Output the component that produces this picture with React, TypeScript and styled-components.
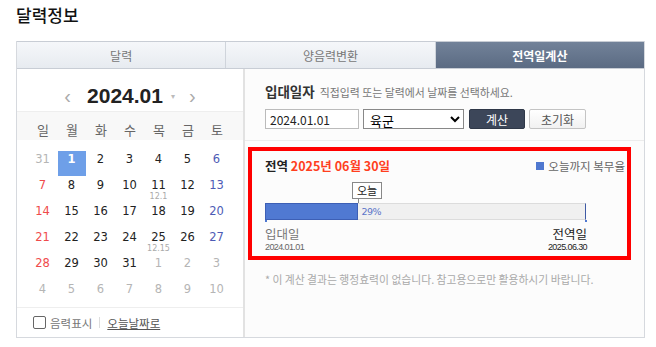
import React from "react";
import styled, { createGlobalStyle } from "styled-components";

const GlobalStyle = createGlobalStyle`
  body {
    margin: 0;
    background: #fff;
    font-family: "Liberation Sans", "Noto Sans CJK KR", sans-serif;
  }
`;

type Day = { n: number; muted?: boolean; lunar?: string; selected?: boolean };

const weeks: Day[][] = [
  [{ n: 31, muted: true }, { n: 1, selected: true }, { n: 2 }, { n: 3 }, { n: 4 }, { n: 5 }, { n: 6 }],
  [{ n: 7 }, { n: 8 }, { n: 9 }, { n: 10 }, { n: 11, lunar: "12.1" }, { n: 12 }, { n: 13 }],
  [{ n: 14 }, { n: 15 }, { n: 16 }, { n: 17 }, { n: 18 }, { n: 19 }, { n: 20 }],
  [{ n: 21 }, { n: 22 }, { n: 23 }, { n: 24 }, { n: 25, lunar: "12.15" }, { n: 26 }, { n: 27 }],
  [{ n: 28 }, { n: 29 }, { n: 30 }, { n: 31 }, { n: 1, muted: true }, { n: 2, muted: true }, { n: 3, muted: true }],
  [4, 5, 6, 7, 8, 9, 10].map((n) => ({ n, muted: true })),
];

const weekdays = ["일", "월", "화", "수", "목", "금", "토"];
const tabs = ["달력", "양음력변환", "전역일계산"];
const percent = 29;

const dayColor = (d: Day, col: number) => {
  if (d.selected) return "#fff";
  if (d.muted) return "#b5b5b5";
  if (col === 0) return "#ef4b4b";
  if (col === 6) return "#4d5bb5";
  return "#222";
};

const App = () => {
  return (
    <Page>
      <GlobalStyle />
      <Title>달력정보</Title>
      <Box>
        <TabBar>
          {tabs.map((t, i) => (
            <Tab key={t} active={i === 2}>
              {t}
            </Tab>
          ))}
        </TabBar>
        <Body>
          <CalendarPanel>
            <MonthHead>
              <Arrow>‹</Arrow>
              <Month>2024.01</Month>
              <Caret>▾</Caret>
              <Arrow>›</Arrow>
            </MonthHead>
            <WeekRow>
              {weekdays.map((w) => (
                <WeekLabel key={w}>{w}</WeekLabel>
              ))}
            </WeekRow>
            <Days>
              {weeks.map((week, wi) =>
                week.map((d, col) => (
                  <Cell key={`${wi}-${col}`} selected={d.selected}>
                    <Num color={dayColor(d, col)} bold={d.selected}>
                      {d.n}
                    </Num>
                    {d.lunar && <Lunar>{d.lunar}</Lunar>}
                  </Cell>
                ))
              )}
            </Days>
            <CalFooter>
              <Check />
              <FooterText>음력표시</FooterText>
              <Sep />
              <TodayLink>오늘날짜로</TodayLink>
            </CalFooter>
          </CalendarPanel>
          <CalcPanel>
            <Form>
              <FormLabel>
                입대일자 <Hint>직접입력 또는 달력에서 날짜를 선택하세요.</Hint>
              </FormLabel>
              <FormRow>
                <DateInput defaultValue="2024.01.01" />
                <Select defaultValue="육군">
                  <option>육군</option>
                  <option>해군</option>
                  <option>공군</option>
                  <option>해병대</option>
                </Select>
                <DarkButton>계산</DarkButton>
                <LightButton>초기화</LightButton>
              </FormRow>
            </Form>
            <Result>
              <ResultHead>
                <ResultTitle>
                  전역 <Red>2025년 06월 30일</Red>
                </ResultTitle>
                <Legend>
                  <LegendSwatch />
                  오늘까지 복무율
                </Legend>
              </ResultHead>
              <BarArea>
                <TodayTag style={{ left: `calc(${percent}% - 6px)` }}>오늘</TodayTag>
                <TodayLine style={{ left: `${percent}%` }} />
                <Bar>
                  <Fill style={{ width: `${percent}%` }} />
                  <Percent>{percent}%</Percent>
                </Bar>
              </BarArea>
              <Ends>
                <End>
                  <EndLabel>입대일</EndLabel>
                  <EndDate>2024.01.01</EndDate>
                </End>
                <End right>
                  <EndLabel dark>전역일</EndLabel>
                  <EndDate dark>2025.06.30</EndDate>
                </End>
              </Ends>
            </Result>
            <Note>* 이 계산 결과는 행정효력이 없습니다. 참고용으로만 활용하시기 바랍니다.</Note>
          </CalcPanel>
        </Body>
      </Box>
    </Page>
  );
};

export default App;

const Page = styled.div`
  padding: 4px 11px 0 16px;
  width: 629px;
`;
const Title = styled.div`
  font-family: "Noto Sans CJK KR", sans-serif;
  font-size: 17px;
  font-weight: 500;
  line-height: 22px;
  color: #111;
  height: 37px;
`;
const Box = styled.div`
  border: 1px solid #d6d9de;
  border-top: none;
  height: 296px;
  display: flex;
  flex-direction: column;
`;
const TabBar = styled.div`
  display: flex;
  height: 28px;
  border-top: 1px solid #c8cdd5;
  border-bottom: 1px solid #c8cdd5;
  background: linear-gradient(#f5f7fa, #e7ebf0);
`;
const Tab = styled.div<{ active?: boolean }>`
  flex: 1;
  display: flex;
  align-items: center;
  justify-content: center;
  font-family: "Noto Sans CJK KR", sans-serif;
  font-size: 12px;
  color: ${(p) => (p.active ? "#fff" : "#777")};
  font-weight: ${(p) => (p.active ? "bold" : "normal")};
  background: ${(p) => (p.active ? "linear-gradient(#728299, #5b6b83)" : "transparent")};
  border-left: 1px solid #cfd4db;
  &:first-child {
    border-left: none;
  }
`;
const Body = styled.div`
  flex: 1;
  display: flex;
`;
const CalendarPanel = styled.div`
  width: 226px;
  border-right: 2px solid #e2e2e2;
  background: #fff;
  display: flex;
  flex-direction: column;
`;
const MonthHead = styled.div`
  height: 43px;
  display: flex;
  align-items: center;
  justify-content: center;
  gap: 8px;
  padding-top: 12px;
  box-sizing: border-box;
  border-bottom: 1px solid #eee;
`;
const Arrow = styled.span`
  font-size: 20px;
  color: #aaa;
  line-height: 20px;
  margin: 0 4px;
`;
const Month = styled.span`
  font-family: "Liberation Sans", sans-serif;
  font-weight: bold;
  font-size: 21px;
  color: #222;
  margin-left: 4px;
`;
const Caret = styled.span`
  font-size: 8px;
  color: #bbb;
  margin-right: 2px;
`;
const WeekRow = styled.div`
  display: grid;
  grid-template-columns: repeat(7, 29px);
  justify-content: center;
  height: 28px;
  align-items: center;
  background: #f8f8f8;
`;
const WeekLabel = styled.div`
  text-align: center;
  font-family: "Noto Sans CJK KR", sans-serif;
  font-size: 13px;
  color: #666;
  padding-top: 6px;
`;
const Days = styled.div`
  display: grid;
  grid-template-columns: repeat(7, 29px);
  grid-auto-rows: 26px;
  justify-content: center;
  margin-top: 11px;
`;
const Cell = styled.div<{ selected?: boolean }>`
  text-align: center;
  margin: 0 1px 1px 0;
  background: ${(p) => (p.selected ? "#6e9fe8" : "transparent")};
`;
const Num = styled.div<{ color: string; bold?: boolean }>`
  font-family: "DejaVu Sans", sans-serif;
  font-size: 11.5px;
  line-height: 14px;
  padding-top: 1px;
  color: ${(p) => p.color};
  font-weight: ${(p) => (p.bold ? "bold" : "normal")};
`;
const Lunar = styled.div`
  font-family: "DejaVu Sans", sans-serif;
  font-size: 8px;
  line-height: 10px;
  color: #aaa;
`;
const CalFooter = styled.div`
  margin-top: auto;
  height: 29px;
  border-top: 1px solid #eee;
  display: flex;
  align-items: center;
  padding-left: 16px;
  font-family: "Noto Sans CJK KR", sans-serif;
  font-size: 11.5px;
`;
const Check = styled.span`
  width: 11px;
  height: 11px;
  border: 1px solid #666;
  border-radius: 2px;
  margin-right: 4px;
`;
const FooterText = styled.span`
  color: #777;
`;
const Sep = styled.span`
  width: 1px;
  height: 11px;
  background: #ddd;
  margin: 0 7px;
`;
const TodayLink = styled.span`
  color: #555;
  text-decoration: underline;
`;
const CalcPanel = styled.div`
  flex: 1;
  background: #fcfcfc;
  display: flex;
  flex-direction: column;
`;
const Form = styled.div`
  height: 72px;
  border-bottom: 1px solid #ececec;
  padding: 12px 0 0 20px;
  box-sizing: border-box;
  font-family: "Noto Sans CJK KR", sans-serif;
`;
const FormLabel = styled.div`
  font-size: 13.5px;
  font-weight: bold;
  color: #333;
  line-height: 20px;
`;
const Hint = styled.span`
  font-size: 10.9px;
  font-weight: normal;
  color: #777;
  margin-left: 2px;
`;
const FormRow = styled.div`
  display: flex;
  gap: 4px;
  margin-top: 7px;
  height: 20px;
`;
const DateInput = styled.input`
  width: 94px;
  height: 20px;
  box-sizing: border-box;
  border: 1px solid #bbb;
  padding: 0 4px;
  font-family: "Noto Sans CJK KR", sans-serif;
  font-size: 12px;
  color: #222;
  background: #fff;
`;
const Select = styled.select`
  width: 101px;
  height: 20px;
  box-sizing: border-box;
  border: 1px solid #888;
  font-family: "Noto Sans CJK KR", sans-serif;
  font-size: 13px;
  padding: 0 2px;
  background: #fff;
`;
const DarkButton = styled.button`
  width: 56px;
  height: 20px;
  margin-left: 1px;
  border: 1px solid #2f3848;
  border-radius: 2px;
  background: #3c4659;
  color: #fff;
  font-family: "Noto Sans CJK KR", sans-serif;
  font-size: 12px;
  padding: 0;
`;
const LightButton = styled.button`
  width: 57px;
  height: 20px;
  border: 1px solid #c4c4c4;
  border-radius: 2px;
  background: linear-gradient(#fff, #f1f1f1);
  color: #555;
  font-family: "Noto Sans CJK KR", sans-serif;
  font-size: 12px;
  padding: 0;
`;
const Result = styled.div`
  margin: 6px 13px 0 3px;
  border: 4px solid #ff0000;
  height: 99px;
  padding: 6px 13px 0 13px;
  font-family: "Noto Sans CJK KR", sans-serif;
`;
const ResultHead = styled.div`
  display: flex;
  justify-content: space-between;
  align-items: center;
  line-height: 18px;
  margin-right: -11px;
`;
const ResultTitle = styled.div`
  font-size: 12.5px;
  font-weight: bold;
  color: #222;
`;
const Red = styled.span`
  color: #ff3f1f;
`;
const Legend = styled.div`
  display: flex;
  align-items: center;
  font-size: 11.5px;
  color: #666;
`;
const LegendSwatch = styled.span`
  width: 8px;
  height: 8px;
  background: #4f78d0;
  margin-right: 4px;
`;
const BarArea = styled.div`
  position: relative;
  width: 321px;
  margin-top: 28px;
`;
const TodayTag = styled.div`
  position: absolute;
  top: -21px;
  width: 28px;
  height: 15px;
  border: 1px solid #888;
  background: #fff;
  font-size: 11px;
  line-height: 15px;
  text-align: center;
  color: #222;
`;
const TodayLine = styled.div`
  position: absolute;
  top: -5px;
  width: 1px;
  height: 5px;
  background: #888;
`;
const Bar = styled.div`
  position: relative;
  height: 17px;
  box-sizing: border-box;
  background: #f0f0f0;
  border: 1px solid #dcdcdc;
  border-right: 1px solid #3e5aa5;
  display: flex;
  align-items: center;
  &::before,
  &::after {
    content: "";
    position: absolute;
    bottom: -3px;
    width: 2px;
    height: 2px;
    background: #4f78d0;
  }
  &::before {
    left: -1px;
  }
  &::after {
    right: -2px;
  }
`;
const Fill = styled.div`
  height: 17px;
  margin: -1px 0 -1px -1px;
  box-sizing: border-box;
  background: #5079d2;
  border: 1px solid #3d5fb5;
`;
const Percent = styled.span`
  font-family: "DejaVu Sans", sans-serif;
  font-size: 9.5px;
  letter-spacing: -0.5px;
  color: #5b74c9;
  margin-left: 4px;
`;
const Ends = styled.div`
  width: 322px;
  display: flex;
  justify-content: space-between;
  margin-top: 6px;
`;
const End = styled.div<{ right?: boolean }>`
  text-align: ${(p) => (p.right ? "right" : "left")};
`;
const EndLabel = styled.div<{ dark?: boolean }>`
  font-size: 12.5px;
  line-height: 15px;
  color: ${(p) => (p.dark ? "#222" : "#777")};
`;
const EndDate = styled.div<{ dark?: boolean }>`
  font-family: "Liberation Sans", sans-serif;
  font-size: 9px;
  letter-spacing: -0.6px;
  line-height: 12px;
  color: ${(p) => (p.dark ? "#222" : "#666")};
`;
const Note = styled.div`
  font-family: "Noto Sans CJK KR", sans-serif;
  font-size: 10.8px;
  color: #aaa;
  margin: 11px 0 0 20px;
`;
